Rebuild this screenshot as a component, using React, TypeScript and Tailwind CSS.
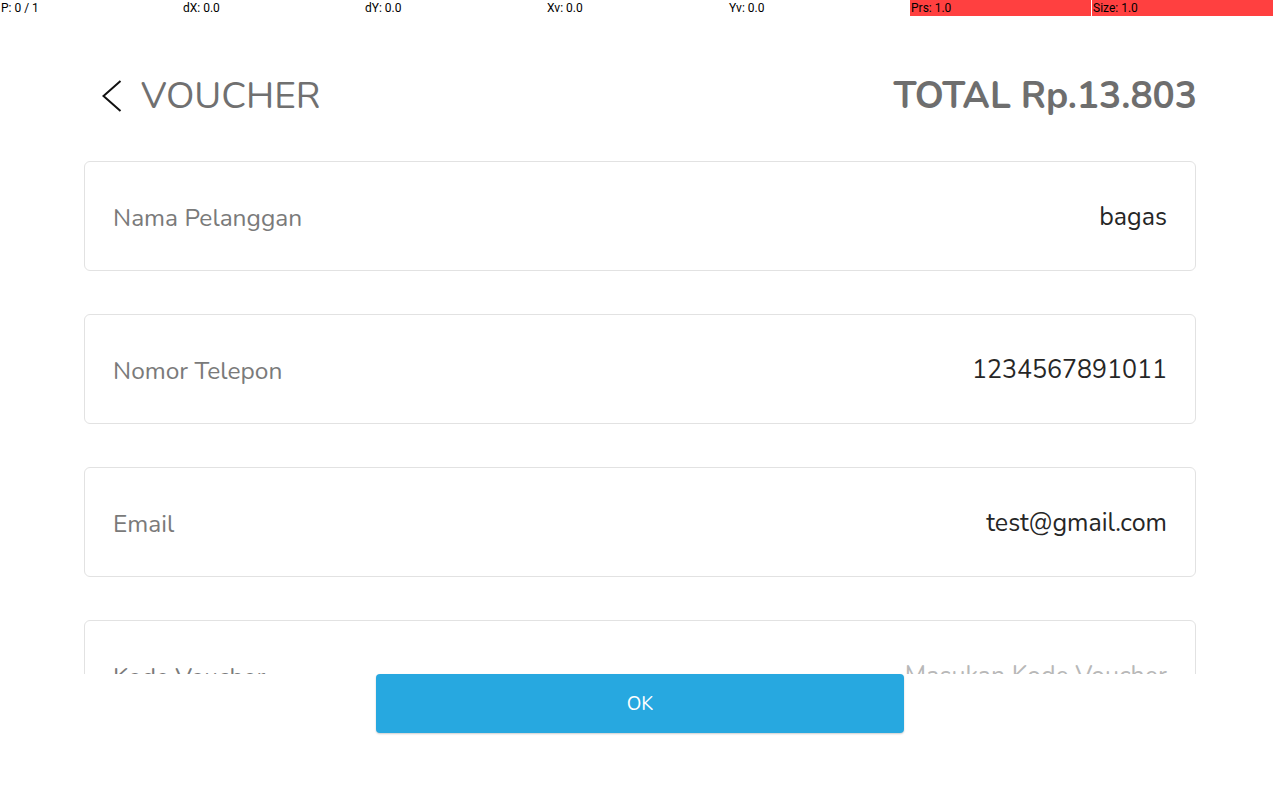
type Field = { label: string; value?: string; placeholder?: string };

const fields: Field[] = [
  { label: "Nama Pelanggan", value: "bagas" },
  { label: "Nomor Telepon", value: "1234567891011" },
  { label: "Email", value: "test@gmail.com" },
  { label: "Kode Voucher", placeholder: "Masukan Kode Voucher" },
];

const stats = [
  { text: "P: 0 / 1", hot: false },
  { text: "dX: 0.0", hot: false },
  { text: "dY: 0.0", hot: false },
  { text: "Xv: 0.0", hot: false },
  { text: "Yv: 0.0", hot: false },
  { text: "Prs: 1.0", hot: true },
  { text: "Size: 1.0", hot: true },
];

const PointerBar = () => (
  <div className="absolute top-0 left-0 right-0 flex gap-px pr-[7px] font-['Roboto',sans-serif] text-[12px] leading-[17px] text-black">
    {stats.map((s) => (
      <div
        key={s.text}
        className={`flex-1 h-[16px] pl-[1px] ${s.hot ? "bg-[#ff4040]" : ""}`}
      >
        {s.text}
      </div>
    ))}
  </div>
);

const App = () => {
  return (
    <div className="relative w-[1280px] h-[800px] bg-white flex flex-col font-['Nunito','Lato',sans-serif] overflow-hidden">
      <div className="h-[674px] overflow-hidden px-[84px] pt-[59px]">
        <div className="h-[72px] pt-[4px] flex items-center justify-between mb-[30px]">
          <div className="flex items-center">
            <svg
              width="20"
              height="32"
              viewBox="0 0 20 32"
              className="ml-[18px] -mt-[2px]"
              fill="none"
              stroke="#111"
              strokeWidth="2"
            >
              <polyline points="18.5,1 1.5,16 18.5,31" />
            </svg>
            <span className="ml-[19px] text-[37px] text-[#707070]">
              VOUCHER
            </span>
          </div>
          <span className="text-[37px] font-bold text-[#6e6e6e] -mr-[1px]">
            TOTAL Rp.13.803
          </span>
        </div>
        <div className="flex flex-col gap-[43px]">
          {fields.map((f) => (
            <div
              key={f.label}
              className="h-[110px] shrink-0 border border-[#e2e2e2] rounded-[6px] flex items-center justify-between px-[28px] pt-[4px]"
            >
              <span className="text-[24.5px] text-[#7a7a7a]">{f.label}</span>
              {f.value ? (
                <span className="text-[25px] text-[#262626]">{f.value}</span>
              ) : (
                <span className="text-[25px] text-[#b8b8b8]">{f.placeholder}</span>
              )}
            </div>
          ))}
        </div>
      </div>
      <div className="flex justify-center">
        <button className="w-[528px] h-[59px] bg-[#27a8e0] rounded-[4px] text-white text-[19px] pt-[2px] shadow-[0_1px_2px_rgba(0,0,0,0.2)]">
          OK
        </button>
      </div>
      <PointerBar />
    </div>
  );
};

export default App;
